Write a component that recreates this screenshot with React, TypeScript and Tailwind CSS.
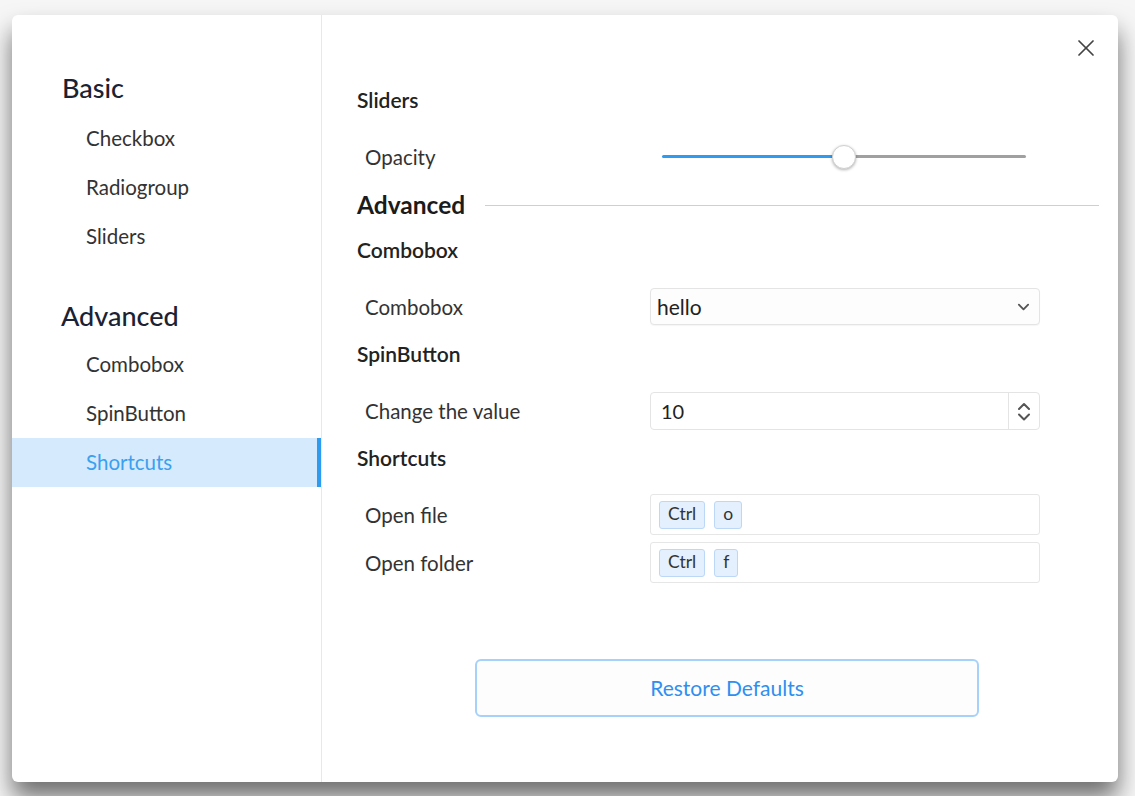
import { X } from "lucide-react";

const font = { fontFamily: "Lato, 'Noto Sans', sans-serif" };

function Chevron({ up = false, w = 14 }: { up?: boolean; w?: number }) {
  return (
    <svg width={w} height={8} viewBox="0 0 14 8" fill="none" stroke="#555" strokeWidth={2} strokeLinecap="round" strokeLinejoin="round">
      <polyline points={up ? "2,7 7,2 12,7" : "2,1.5 7,6.5 12,1.5"} />
    </svg>
  );
}

function NavItem({ label, active = false }: { label: string; active?: boolean }) {
  return (
    <div
      className={
        active
          ? "flex h-[49px] items-center border-r-[4px] border-[#2d9cf0] bg-[#d5eafc] pl-[74px] text-[20.5px] text-[#3aa0f0]"
          : "flex h-[49px] items-center pl-[74px] text-[20.5px] text-[#333]"
      }
    >
      {label}
    </div>
  );
}

function SectionTitle({ children }: { children: React.ReactNode }) {
  return <div className="text-[21px] font-semibold leading-[28px] text-[#222]">{children}</div>;
}

function Row({ label, children }: { label: string; children: React.ReactNode }) {
  return (
    <div className="flex items-center">
      <div className="w-[293px] pl-[8px] text-[20.5px] leading-[28px] text-[#333]">{label}</div>
      <div className="w-[390px]">{children}</div>
    </div>
  );
}

function Key({ k }: { k: string }) {
  return (
    <span className="flex h-[28px] items-center rounded-[3px] border border-[#bcd8f6] bg-[#e4f0fd] px-[8px] text-[17.5px] text-[#333]">
      {k}
    </span>
  );
}

function ShortcutBox({ keys }: { keys: string[] }) {
  return (
    <div className="flex h-[41px] items-center gap-[9px] rounded-[3px] border border-[#e6e6e6] bg-white px-[8px]">
      {keys.map((k) => (
        <Key key={k} k={k} />
      ))}
    </div>
  );
}

export default function App() {
  return (
    <div className="h-[796px] w-[1135px] overflow-hidden bg-[#f6f6f6] pl-[12px] pt-[15px]" style={font}>
      <div className="relative flex h-[767px] w-[1106px] rounded-[6px] bg-white shadow-[0_16px_24px_rgba(0,0,0,0.55)]">
        {/* sidebar */}
        <aside className="w-[310px] shrink-0 border-r border-[#e8e8e8] pt-[53px]">
          <div className="pl-[50px] text-[27px] font-medium text-[#1b2233]">Basic</div>
          <div className="mt-[5px]">
            <NavItem label="Checkbox" />
            <NavItem label="Radiogroup" />
            <NavItem label="Sliders" />
          </div>
          <div className="mt-[35px] pl-[49px] text-[27px] font-medium text-[#1b2233]">Advanced</div>
          <div className="mt-[4px]">
            <NavItem label="Combobox" />
            <NavItem label="SpinButton" />
            <NavItem label="Shortcuts" active />
          </div>
        </aside>

        {/* content */}
        <main className="flex-1 pl-[35px] pr-[19px] pt-[71px]">
          <SectionTitle>Sliders</SectionTitle>
          <div className="mt-[28px] flex h-[30px] items-center">
            <div className="w-[305px] pl-[8px] text-[20.5px] leading-[28px] text-[#333]">Opacity</div>
            <div className="relative h-[24px] w-[364px]">
              <div className="absolute left-0 top-[10px] h-[3px] w-[182px] rounded-full bg-[#2d9cf0]" />
              <div className="absolute left-[182px] top-[10px] h-[3px] w-[182px] rounded-full bg-[#a0a0a0]" />
              <div className="absolute left-[170px] top-0 h-[24px] w-[24px] rounded-full border border-[#d0d0d0] bg-white shadow-[0_1px_3px_rgba(0,0,0,0.3)]" />
            </div>
          </div>
          <div className="mt-[15px] flex items-center gap-[20px]">
            <div className="text-[24.5px] font-bold leading-[36px] text-[#1b1b1b]">Advanced</div>
            <div className="h-px flex-1 bg-[#cfcfcf]" />
          </div>
          <div className="mt-[13px]">
            <SectionTitle>Combobox</SectionTitle>
          </div>
          <div className="mt-[24px]">
            <Row label="Combobox">
              <div className="flex h-[37px] items-center justify-between rounded-[4px] border border-[#e4e4e4] bg-[#fdfdfd] pl-[6px] pr-[9px] shadow-[0_1px_1px_rgba(0,0,0,0.04)]">
                <span className="text-[21px] text-[#222]">hello</span>
                <Chevron w={13} />
              </div>
            </Row>
          </div>
          <div className="mt-[15px]">
            <SectionTitle>SpinButton</SectionTitle>
          </div>
          <div className="mt-[24px]">
            <Row label="Change the value">
              <div className="flex h-[38px] items-center rounded-[4px] border border-[#e4e4e4] bg-white">
                <span className="flex-1 pl-[10px] text-[20px] text-[#222]">10</span>
                <div className="flex h-full w-[31px] flex-col items-center justify-center gap-[3px] border-l border-[#e4e4e4]">
                  <Chevron up />
                  <Chevron />
                </div>
              </div>
            </Row>
          </div>
          <div className="mt-[14px]">
            <SectionTitle>Shortcuts</SectionTitle>
          </div>
          <div className="mt-[22px] flex flex-col gap-[7px]">
            <Row label="Open file">
              <ShortcutBox keys={["Ctrl", "o"]} />
            </Row>
            <Row label="Open folder">
              <ShortcutBox keys={["Ctrl", "f"]} />
            </Row>
          </div>
          <div className="mt-[76px] pl-[118px]">
            <button className="flex h-[58px] w-[504px] items-center justify-center rounded-[6px] border-2 border-[#a6d1fa] bg-[#fdfdfe] text-[21px] text-[#2f8ff0]">
              Restore Defaults
            </button>
          </div>
        </main>

        <button className="absolute right-[18px] top-[19px] text-[#444]">
          <X size={28} strokeWidth={1.5} />
        </button>
      </div>
    </div>
  );
}
